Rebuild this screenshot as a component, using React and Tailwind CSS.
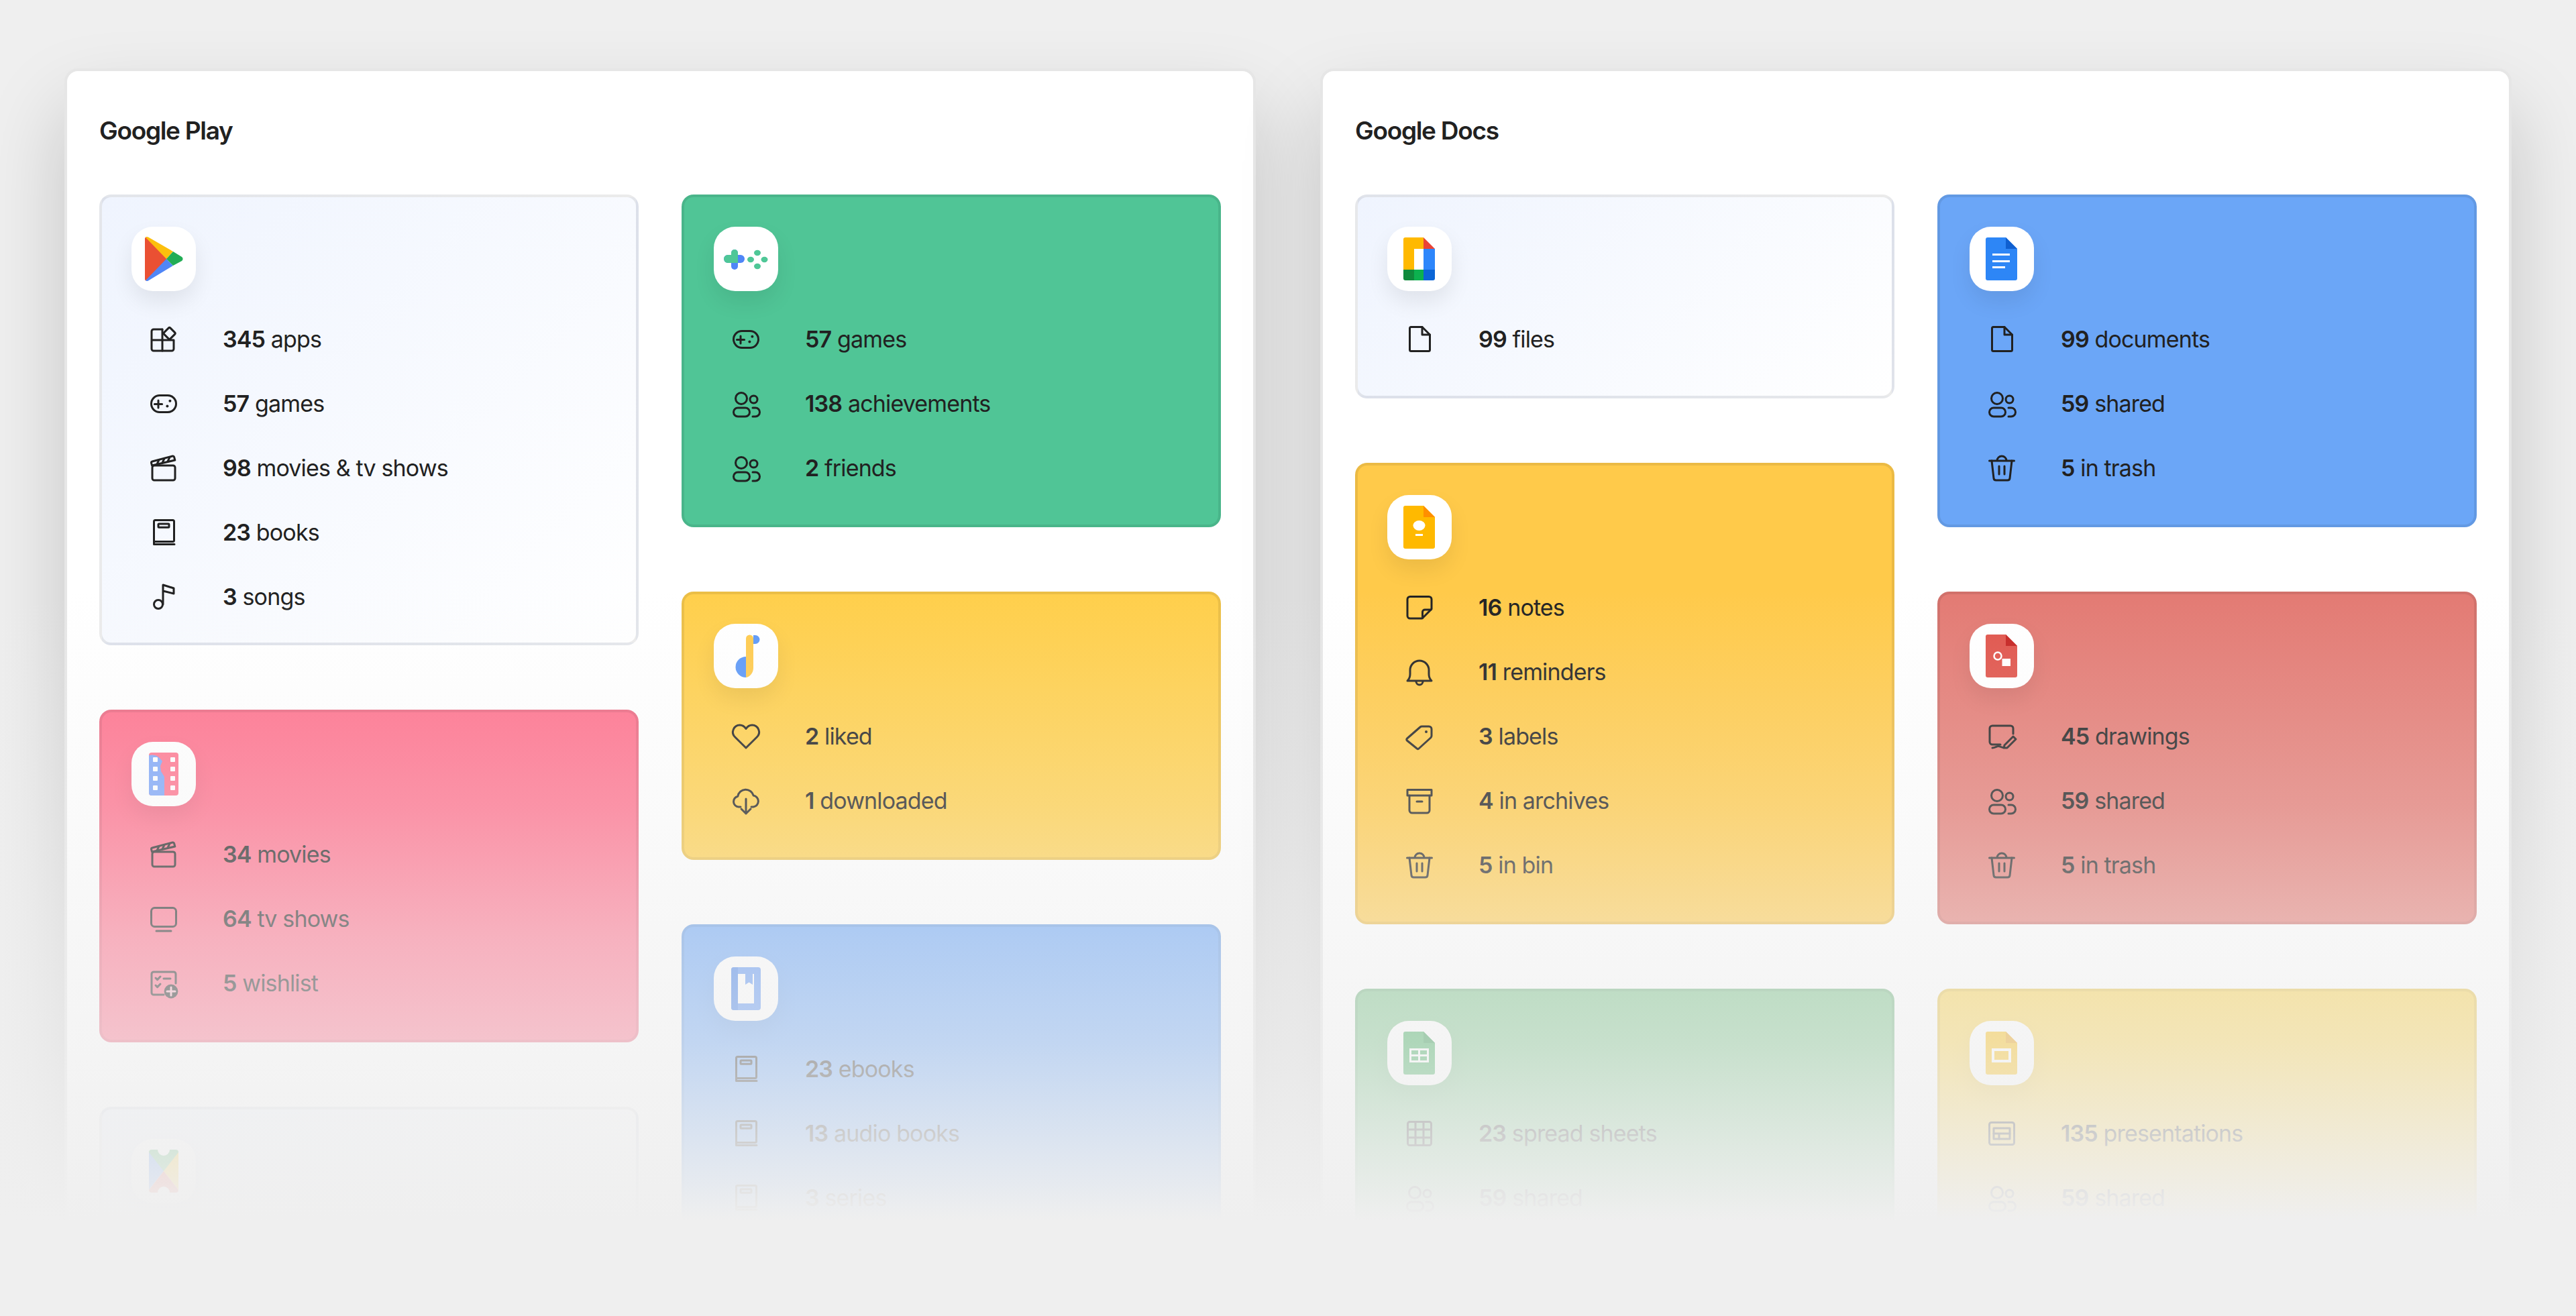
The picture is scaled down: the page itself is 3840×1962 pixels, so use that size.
import React from 'react';

// row icons, all drawn on a 24 unit grid at 48px
const rowIcons = {
  apps: (
    <>
      <path d="M11 4.5H4.5A1.5 1.5 0 0 0 3 6v13a1.5 1.5 0 0 0 1.5 1.5H18a1.5 1.5 0 0 0 1.5-1.5v-6.5H3" />
      <path d="M11 4.5v16" />
      <rect x="13" y="4.2" width="6.6" height="6.6" rx="1" transform="rotate(45 16.3 7.5)" />
    </>
  ),
  game: (
    <>
      <rect x="2.75" y="5.75" width="18.5" height="12.5" rx="6.25" />
      <path d="M8 9.5v5.5M5.2 12.2h5.6" />
      <circle cx="16.7" cy="9.9" r="1" fill="currentColor" stroke="none" />
      <circle cx="14.7" cy="13.7" r="1" fill="currentColor" stroke="none" />
    </>
  ),
  clapper: (
    <>
      <rect x="3.5" y="10" width="17" height="11" rx="1.5" />
      <path d="M3.3 10 2.8 8.2a1 1 0 0 1 .7-1.2L18.6 3a1 1 0 0 1 1.2.7l.6 2.3L3.3 10Z" />
      <path d="m7 9 1.5-3.2M11 8l1.5-3.2M15 7l1.5-3.2" />
    </>
  ),
  book: (
    <>
      <rect x="4.75" y="2.75" width="15" height="16" rx="1" />
      <path d="M4.75 18v2.75H20" />
      <rect x="8" y="5.5" width="8" height="2.6" rx="0.5" />
    </>
  ),
  music: (
    <>
      <circle cx="8" cy="17.5" r="3.25" />
      <path d="M11.5 17.5V3l8 2.5v4l-8-2" />
    </>
  ),
  people: (
    <>
      <circle cx="8.5" cy="8" r="4.25" />
      <circle cx="17.75" cy="8.75" r="2.75" />
      <rect x="2.75" y="15" width="12" height="6.5" rx="3.25" />
      <path d="M17 15h2a3.25 3.25 0 0 1 0 6.5h-2" />
    </>
  ),
  heart: <path d="M12 20.5 3.8 12.4A5.2 5.2 0 0 1 7.4 3.5c1.9 0 3.5 1 4.6 2.7 1.1-1.7 2.7-2.7 4.6-2.7a5.2 5.2 0 0 1 3.6 8.9L12 20.5Z" />,
  cloud: (
    <>
      <path d="M8 16.5H6.5a4 4 0 0 1-.6-7.9A6 6 0 0 1 17.6 8a4.3 4.3 0 0 1-.1 8.5H16" />
      <path d="M12 10.5v11M8.5 18l3.5 3.5 3.5-3.5" />
    </>
  ),
  tv: (
    <>
      <rect x="2.75" y="3.75" width="18.5" height="14" rx="2.5" />
      <path d="M6.5 21h11" />
    </>
  ),
  wishlist: (
    <>
      <path d="M21 12V5a1.5 1.5 0 0 0-1.5-1.5h-15A1.5 1.5 0 0 0 3 5v14a1.5 1.5 0 0 0 1.5 1.5H12" />
      <path d="m6 8 1.3 1.3L9.5 7M6 13.5l1.3 1.3 2.2-2.3M12 8.5h5" />
      <circle cx="17.5" cy="18" r="5.2" fill="currentColor" stroke="none" />
      <path d="M17.5 15v6M14.5 18h6" stroke="#f7b6c5" />
    </>
  ),
  file: (
    <>
      <path d="M5.75 2.75H14l5.75 5.75v11.25a1 1 0 0 1-1 1H5.75a1 1 0 0 1-1-1v-16a1 1 0 0 1 1-1Z" />
      <path d="M14 2.75V8.5h5.75" />
    </>
  ),
  note: (
    <>
      <path d="M5 3.75h14a2 2 0 0 1 2 2V13l-7 7H5a2 2 0 0 1-2-2V5.75a2 2 0 0 1 2-2Z" />
      <path d="M20.5 13.5H16a1.75 1.75 0 0 0-1.75 1.75v4.5" />
    </>
  ),
  bell: (
    <>
      <path d="M3 18.5c1.4-1.4 2-2.6 2-5V10.500a7 7 0 0 1 14 0v3c0 2.400.6 3.600 2 5H3Z" />
      <path d="M9.500 19a2.500 2.500 0 0 0 5 0" />
    </>
  ),
  tag: (
    <>
      <path d="M2.750 13.500 12.500 5a2 2 0 0 1 1.300-.5H19a2 2 0 0 1 2 2v5a2 2 0 0 1-.7 1.500L11.500 21a1 1 0 0 1-1.400 0l-7.400-6a1 1 0 0 1 .05-1.500Z" />
      <circle cx="17" cy="8.500" r="1" fill="currentColor" stroke="none" />
    </>
  ),
  archive: (
    <>
      <path d="M3 3.750h18V8H3z" />
      <path d="M4.500 8v11a2 2 0 0 0 2 2h11a2 2 0 0 0 2-2V8M10 12.500h4" />
    </>
  ),
  trash: (
    <>
      <path d="M2.750 6.500h18.500M8.500 6.500a3.500 3.500 0 0 1 7 0" />
      <path d="m4.500 6.500 1.500 13a1.700 1.700 0 0 0 1.700 1.500h8.600a1.700 1.700 0 0 0 1.700-1.500l1.500-13M10 10.500v6M14 10.500v6" />
    </>
  ),
  drawing: (
    <>
      <path d="M20.500 10V6a2 2 0 0 0-2-2H5a2 2 0 0 0-2 2v10a2 2 0 0 0 2 2h6" />
      <path d="M5 20.500c2 0 3-1.200 4.500-1.200s2 .9 3.500.9" />
      <path d="m14 18.500 6.500-6.500 2 2-6.500 6.500h-2.500l.5-2Z" />
    </>
  ),
  grid: (
    <>
      <rect x="3.250" y="3.250" width="17.500" height="17.500" rx="1.500" />
      <path d="M3.250 9h17.500M3.250 15h17.500M9 3.250v17.500M15 3.250v17.500" />
    </>
  ),
  slide: (
    <>
      <rect x="2.750" y="3.750" width="18.500" height="16.500" rx="1.500" />
      <rect x="6" y="8" width="12" height="8" />
      <path d="M6 12h12M10 12v4" />
    </>
  ),
};

const RowIcon = ({ name }) => (
  <svg viewBox="0 0 24 24" fill="none" stroke="currentColor" strokeWidth="1.500" strokeLinecap="round" strokeLinejoin="round" className="w-[48px] h-[48px]">
    {rowIcons[name]}
  </svg>
);

const docBody = 'M27 16h27l17 17v44a3 3 0 0 1-3 3H27a3 3 0 0 1-3-3V19a3 3 0 0 1 3-3Z';

// app logos on the 96px tile
const logos = {
  play: (
    <>
      <path d="M20 18c0-2 1.500-3 3-2l30 32-30 32c-1.500 1-3 0-3-2V18Z" fill="#ea5033" />
      <path d="M21 16c1-1.300 2.500-1.300 4-.5L62 37 52 48 21 16Z" fill="#fcbf0d" />
      <path d="M21 80c1 1.300 2.500 1.300 4 .5L62 58 52 48 21 80Z" fill="#4f86f7" />
      <path d="m52 48 10-11 13 8c2 1.500 2 4.500 0 6l-13 7-10-10Z" fill="#22ad55" />
    </>
  ),
  games: (
    <>
      <rect x="15" y="42" width="31" height="12" rx="6" fill="#4f86f7" />
      <path d="M21 42h15v12H21a6 6 0 0 1 0-12Z" fill="#4fc797" />
      <rect x="26" y="34" width="10" height="30" rx="5" fill="#4f86f7" />
      <path d="M26 39a5 5 0 0 1 10 0v15H26V39Z" fill="#4fc797" />
      <ellipse cx="55" cy="49" rx="5" ry="4.200" fill="#4fc797" />
      <ellipse cx="65" cy="39" rx="5" ry="4.200" fill="#4fc797" />
      <ellipse cx="75.500" cy="49" rx="5" ry="4.200" fill="#4fc797" />
      <ellipse cx="65" cy="59" rx="5" ry="4.200" fill="#4fc797" />
    </>
  ),
  music: (
    <>
      <path d="M48 49a15.500 15.500 0 0 0 0 31V49Z" fill="#5c98f7" />
      <path d="M48 22a5.500 5.500 0 0 1 11 0v44c0 7-5 13-11 14V22Z" fill="#ffca4c" />
      <path d="M59 17h3a6.500 6.500 0 0 1 0 13h-3V17Z" fill="#5c98f7" />
    </>
  ),
  movies: (
    <>
      <rect x="26" y="16" width="44" height="64" rx="4" fill="#ff748e" />
      <path d="M26 20c8-2 15 1 20 9l-3 7 1 8 5 8v28H30a4 4 0 0 1-4-4V20Z" fill="#7ea6f8" />
      {[23, 37, 51, 65].map((y) => (
        <g key={y} fill="#fff">
          <rect x="32" y={y} width="7" height="7" rx="1" />
          <rect x="58" y={y} width="7" height="7" rx="1" />
        </g>
      ))}
    </>
  ),
  books: (
    <>
      <path d="M30 16h36a4 4 0 0 1 4 4v56a4 4 0 0 1-4 4H30a4 4 0 0 1-4-4V20a4 4 0 0 1 4-4Z" fill="#5a93f4" />
      <path d="M30 16h6v64h-6a4 4 0 0 1-4-4V20a4 4 0 0 1 4-4Z" fill="#3f7ee8" />
      <rect x="36" y="26" width="24" height="44" fill="#fff" />
      <path d="M47 26h11v16l-5.500-3.500L47 42V26Z" fill="#5a93f4" />
    </>
  ),
  pass: (
    <>
      <path d="M26 20a4 4 0 0 1 4-4h36a4 4 0 0 1 4 4v28H26V20Z" fill="#34a853" />
      <path d="M26 20 48 48 26 76Z" fill="#4285f4" />
      <path d="M70 20 48 48l22 28Z" fill="#fbbc04" />
      <path d="M30 80a4 4 0 0 1-4-4l22-28 22 28a4 4 0 0 1-4 4H30Z" fill="#ea4335" />
      <circle cx="48" cy="16" r="9" fill="#fff" />
      <circle cx="48" cy="80" r="9" fill="#fff" />
    </>
  ),
  files: (
    <>
      <path d="M27 16h27v17h-14v31H24V19a3 3 0 0 1 3-3Z" fill="#ffb900" />
      <path d="m54 16 17 17H54V16Z" fill="#ea4335" />
      <path d="M54 33h17v31H54z" fill="#2d86fb" />
      <path d="M24 64h16v16H27a3 3 0 0 1-3-3V64Z" fill="#0f8a3c" />
      <path d="M40 64h14v16H40z" fill="#0cb14f" />
      <path d="M54 64h17v13a3 3 0 0 1-3 3H54V64Z" fill="#0b65d6" />
    </>
  ),
  keep: (
    <>
      <path d={docBody} fill="#ffb900" />
      <path d="m54 16 17 17H54V16Z" fill="#ff8f00" />
      <ellipse cx="47.500" cy="45.500" rx="9" ry="7.500" fill="#fff" />
      <rect x="42" y="58" width="11" height="3" fill="#fff" />
    </>
  ),
  docs: (
    <>
      <path d={docBody} fill="#2d86f6" />
      <path d="m54 16 17 17H54V16Z" fill="#0f5fd0" />
      <path d="M34 40h26v3H34zM34 50h26v3H34zM34 59h19v3H34z" fill="#fff" />
    </>
  ),
  drawings: (
    <>
      <path d={docBody} fill="#e0534a" />
      <path d="m54 16 17 17H54V16Z" fill="#c5221f" />
      <circle cx="42" cy="48" r="5.500" fill="none" stroke="#fff" strokeWidth="2.500" />
      <rect x="48.500" y="52" width="12.500" height="11" fill="#fff" />
    </>
  ),
  sheets: (
    <>
      <path d={docBody} fill="#34a853" />
      <path d="m54 16 17 17H54V16Z" fill="#1e8e3e" />
      <rect x="33" y="41" width="29" height="21" fill="#fff" />
      <path d="M36 44h10v6H36zM49 44h10v6H49zM36 53h10v6H36zM49 53h10v6H49z" fill="#34a853" />
    </>
  ),
  slides: (
    <>
      <path d={docBody} fill="#fbbc04" />
      <path d="m54 16 17 17H54V16Z" fill="#ea9a00" />
      <rect x="33" y="41" width="29" height="21" fill="#fff" />
      <rect x="37" y="45" width="21" height="13" fill="#fbbc04" />
    </>
  ),
};

const plain = 'bg-[linear-gradient(135deg,#eff4fe,#ffffff)]';

const panels = [
  {
    title: 'Google Play',
    columns: [
      [
        {
          logo: 'play', tone: plain, pb: 'pb-[20px]',
          rows: [['apps', '345', 'apps'], ['game', '57', 'games'], ['clapper', '98', 'movies & tv shows'], ['book', '23', 'books'], ['music', '3', 'songs']],
        },
        {
          logo: 'movies', tone: 'bg-[#ff6f8b]',
          rows: [['clapper', '34', 'movies'], ['tv', '64', 'tv shows'], ['wishlist', '5', 'wishlist']],
        },
        { logo: 'pass', tone: plain, rows: [] },
      ],
      [
        {
          logo: 'games', tone: 'bg-[#50c596]',
          rows: [['game', '57', 'games'], ['people', '138', 'achievements'], ['people', '2', 'friends']],
        },
        {
          logo: 'music', tone: 'bg-[#ffcf4b]',
          rows: [['heart', '2', 'liked'], ['cloud', '1', 'downloaded']],
        },
        {
          logo: 'books', tone: 'bg-[#6ba6f7]',
          rows: [['book', '23', 'ebooks'], ['book', '13', 'audio books'], ['book', '3', 'series']],
        },
      ],
    ],
  },
  {
    title: 'Google Docs',
    columns: [
      [
        { logo: 'files', tone: plain, rows: [['file', '99', 'files']] },
        {
          logo: 'keep', tone: 'bg-[#ffca4a]',
          rows: [['note', '16', 'notes'], ['bell', '11', 'reminders'], ['tag', '3', 'labels'], ['archive', '4', 'in archives'], ['trash', '5', 'in bin']],
        },
        {
          logo: 'sheets', tone: 'bg-[#7ac389]',
          rows: [['grid', '23', 'spread sheets'], ['people', '59', 'shared']],
        },
      ],
      [
        {
          logo: 'docs', tone: 'bg-[#6ba6f7]',
          rows: [['file', '99', 'documents'], ['people', '59', 'shared'], ['trash', '5', 'in trash']],
        },
        {
          logo: 'drawings', tone: 'bg-[#e37a73]',
          rows: [['drawing', '45', 'drawings'], ['people', '59', 'shared'], ['trash', '5', 'in trash']],
        },
        {
          logo: 'slides', tone: 'bg-[#fad24d]',
          rows: [['slide', '135', 'presentations'], ['people', '59', 'shared']],
        },
      ],
    ],
  },
];

function Card({ logo, tone, rows, pb = 'pb-[36px]' }) {
  return (
    <div className={`border-4 border-black/[0.08] rounded-[18px] px-[44px] pt-[44px] ${pb} ${tone}`}>
      <div className="w-[96px] h-[96px] bg-white rounded-[32px] shadow-[0_16px_32px_rgba(0,0,0,0.08)] mb-[24px]">
        <svg viewBox="0 0 96 96" className="w-[96px] h-[96px]">{logos[logo]}</svg>
      </div>
      {rows.map(([icon, count, label], i) => (
        <div key={i} className="flex items-center h-[96px]">
          <div className="w-[96px] flex justify-center shrink-0">
            <RowIcon name={icon} />
          </div>
          <div className="ml-[40px] text-[34px] leading-[48px] tracking-[-0.025em] whitespace-nowrap">
            <span className="font-semibold">{count}</span> {label}
          </div>
        </div>
      ))}
    </div>
  );
}

export default function App() {
  return (
    <div className="relative h-[1962px] overflow-hidden bg-[#efefef] text-[#212121] [font-family:Inter,sans-serif]">
      <div className="flex gap-[96px] px-[96px] pt-[102px] h-full">
        {panels.map((panel) => (
          <section key={panel.title} className="flex-1 bg-white border-4 border-[#e6e6e6] rounded-[20px] px-[48px] shadow-[0_60px_120px_rgba(0,0,0,0.18)]">
            <h2 className="pt-[69px] pb-[75px] text-[37px] leading-[40px] font-semibold tracking-[-0.035em]">{panel.title}</h2>
            <div className="grid grid-cols-2 gap-x-[64px]">
              {panel.columns.map((cards, c) => (
                <div key={c} className="flex flex-col gap-[96px]">
                  {cards.map((card) => (
                    <Card key={card.logo} {...card} />
                  ))}
                </div>
              ))}
            </div>
          </section>
        ))}
      </div>
      {/* page fades out towards the bottom */}
      <div className="absolute inset-x-0 top-[880px] bottom-0 bg-[linear-gradient(to_bottom,rgba(239,239,239,0)_0,rgba(239,239,239,0.1)_120px,rgba(239,239,239,0.28)_320px,rgba(239,239,239,0.52)_520px,rgba(239,239,239,0.66)_674px,rgba(239,239,239,0.85)_820px,#efefef_940px)]"></div>
    </div>
  );
}
